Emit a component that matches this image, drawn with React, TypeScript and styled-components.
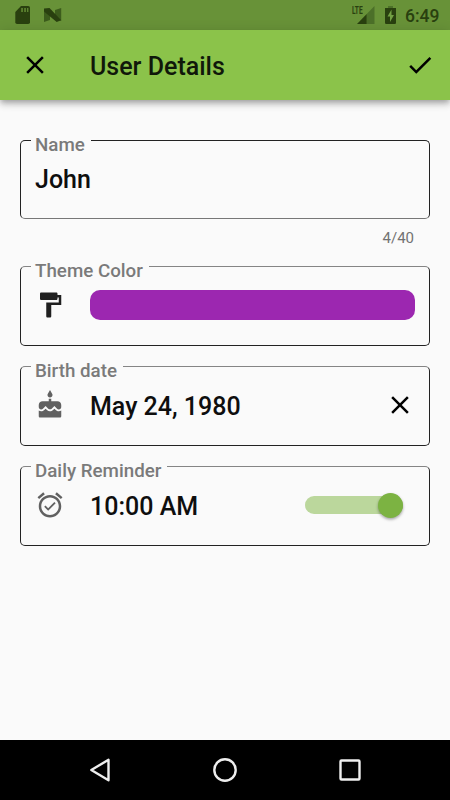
import React from 'react';
import styled, { createGlobalStyle } from 'styled-components';

const GlobalStyle = createGlobalStyle`
  * { box-sizing: border-box; }
  body { margin: 0; background: #fafafa; font-family: Roboto, "Liberation Sans", sans-serif; }
`;

const Screen = styled.div`
  width: 450px;
  height: 800px;
  display: flex;
  flex-direction: column;
  background: #fafafa;
  overflow: hidden;
`;

const StatusBar = styled.div`
  height: 30px;
  flex: none;
  display: flex;
  align-items: center;
  padding: 0 10px 0 12px;
  background: #689238;
  color: #29400f;
`;

const StatusIcons = styled.div`
  display: flex;
  align-items: flex-start;
  height: 30px;
`;

const StatusIcon = styled.svg<{ $w: number; $gap?: number }>`
  display: block;
  width: ${p => p.$w}px;
  height: 30px;
  margin-left: ${p => p.$gap ?? 0}px;
  flex: none;
`;

const Spacer = styled.div`
  flex: 1;
`;

const Network = styled.span`
  width: 11px;
  margin-right: -12px;
  padding-top: 5px;
  font-size: 11px;
  line-height: 11px;
  font-weight: 700;
  white-space: nowrap;
  transform: scaleX(0.6);
  transform-origin: left;
`;

const Clock = styled.span`
  width: 35px;
  margin-left: 9px;
  font-size: 17.5px;
  line-height: 32px;
  font-weight: 500;
`;

const AppBar = styled.header`
  height: 70px;
  flex: none;
  display: flex;
  align-items: center;
  padding: 0 15px 0 20px;
  background: #8bc34a;
  box-shadow: 0 2.5px 5px -1px rgba(0, 0, 0, 0.2), 0 5px 6px rgba(0, 0, 0, 0.14), 0 1px 12px rgba(0, 0, 0, 0.12);
  z-index: 1;
`;

const Title = styled.h1`
  flex: 1;
  margin: 3px 0 0 40px;
  font-size: 25px;
  line-height: 30px;
  font-weight: 500;
  letter-spacing: 0;
  color: #10180a;
`;

const Glyph = styled.svg<{ $color?: string }>`
  display: block;
  width: 30px;
  height: 30px;
  flex: none;
  fill: ${p => p.$color ?? '#000'};
`;

const Form = styled.main`
  flex: 1;
  padding: 30px 20px 0;
`;

const Field = styled.fieldset<{ $height: number; $top: string; $bottom: string }>`
  display: block;
  min-width: 0;
  height: ${p => p.$height}px;
  margin: 0 0 10px;
  padding: 0 14px;
  border: 1px solid #222;
  border-top-color: ${p => p.$top};
  border-bottom-color: ${p => p.$bottom};
  border-radius: 5px;
`;

const Label = styled.legend<{ $width: number }>`
  width: ${p => p.$width}px;
  height: 21px;
  margin-left: -4px;
  padding: 0 0 0 4px;
  font-size: 18.75px;
  line-height: 31px;
  font-weight: 500;
  white-space: nowrap;
  color: #7a7a7a;
`;

const FieldRow = styled.div<{ $top?: number }>`
  display: flex;
  align-items: center;
  height: 30px;
  margin-top: ${p => p.$top ?? 13}px;
`;

const Value = styled.span<{ $inset?: boolean }>`
  flex: 1;
  margin-left: ${p => (p.$inset ? 25 : 0)}px;
  padding-top: 3px;
  font-size: 25px;
  line-height: 30px;
  font-weight: 500;
  letter-spacing: 0;
  color: #0e0e0e;
  white-space: nowrap;
`;

const Counter = styled.div`
  height: 27px;
  padding: 0 16px 0 0;
  text-align: right;
  font-size: 15px;
  line-height: 18px;
  color: #727272;
`;

const Swatch = styled.div`
  flex: 1;
  height: 30px;
  margin-left: 25px;
  border-radius: 10px;
  background: #9c27b0;
`;

const Track = styled.div`
  display: flex;
  align-items: center;
  justify-content: flex-end;
  width: 98px;
  height: 18px;
  margin-right: 12.5px;
  border-radius: 9px;
  background: #bbd79c;
`;

const Thumb = styled.div`
  width: 25px;
  height: 25px;
  flex: none;
  border-radius: 50%;
  background: #7cb342;
  box-shadow: 0 1.5px 3px rgba(0, 0, 0, 0.35);
`;

const NavBar = styled.nav`
  height: 60px;
  flex: none;
  display: flex;
  align-items: center;
  justify-content: center;
  gap: 95px;
  background: #000;
`;

const NavIcon = styled.svg`
  display: block;
  width: 30px;
  height: 30px;
  fill: none;
  stroke: #eee;
  stroke-width: 2.4;
  stroke-linejoin: round;
`;

const CLOSE = 'M19 6.41L17.59 5 12 10.59 6.41 5 5 6.41 10.59 12 5 17.59 6.41 19 12 13.41 17.59 19 19 17.59 13.41 12z';
const CHECK = 'M9 16.17L4.83 12l-1.42 1.41L9 19 21 7l-1.41-1.41z';
const PAINT = 'M18 4V3c0-.55-.45-1-1-1H5c-.55 0-1 .45-1 1v4c0 .55.45 1 1 1h12c.55 0 1-.45 1-1V6h1v4H9v11c0 .55.45 1 1 1h2c.55 0 1-.45 1-1v-9h8V4h-3z';
const CAKE = 'M12 6c1.11 0 2-.9 2-2 0-.38-.1-.73-.29-1.03L12 0l-1.71 2.97c-.19.3-.29.65-.29 1.03 0 1.1.9 2 2 2zm4.6 9.99l-1.07-1.07-1.08 1.07c-1.3 1.3-3.58 1.31-4.89 0l-1.07-1.07-1.09 1.07C6.75 16.64 5.88 17 4.96 17c-.73 0-1.4-.23-1.96-.61V21c0 .55.45 1 1 1h16c.55 0 1-.45 1-1v-4.61c-.56.38-1.23.61-1.96.61-.92 0-1.79-.36-2.44-1.01zM18 9h-5V7h-2v2H6c-1.66 0-3 1.34-3 3v1.54c0 1.08.88 1.96 1.96 1.96.52 0 1.02-.2 1.38-.57l2.14-2.13 2.13 2.13c.74.74 2.03.74 2.77 0l2.14-2.13 2.13 2.13c.37.37.86.57 1.38.57 1.08 0 1.96-.88 1.96-1.96V12C21 10.34 19.66 9 18 9z';
const ALARM = 'M22 5.72l-4.6-3.86-1.29 1.53 4.6 3.86L22 5.72zM7.88 3.39L6.6 1.86 2 5.71l1.29 1.53 4.59-3.85zM12 4c-4.97 0-9 4.03-9 9s4.02 9 9 9c4.97 0 9-4.03 9-9s-4.03-9-9-9zm0 16c-3.87 0-7-3.13-7-7s3.13-7 7-7 7 3.13 7 7-3.13 7-7 7zm-1.46-5.47L8.41 12.4l-1.06 1.06 3.18 3.18 6-6-1.06-1.06-4.93 4.95z';

const Icon = ({ d, color }: { d: string; color?: string }) => (
  <Glyph viewBox="0 0 24 24" $color={color}><path d={d} /></Glyph>
);

export default function App() {
  return (
    <>
      <GlobalStyle />
      <Screen>
        <StatusBar>
          <StatusIcons>
            <StatusIcon $w={20} viewBox="0 0 20 30">
              <path fill="#29400f" d="M9 6h7.2a1.8 1.8 0 0 1 1.8 1.8v14.4a1.8 1.8 0 0 1-1.8 1.8H5.1a1.8 1.8 0 0 1-1.8-1.8V12z" />
              <path fill="#5c8431" d="M9.2 8h1.7v4H9.2zM12.2 8h1.7v4h-1.7zM15 8h1.4v4H15z" />
            </StatusIcon>
            <StatusIcon $w={20} $gap={11} viewBox="0 0 20 30">
              <path fill="#3c5c1c" d="M1 9l6 4v7l-6 2zM18.2 8v13L12 17v-7z" />
              <path fill="#29400f" d="M1 8.5L6.5 8l11.7 12.3-4.5 1.7L1 11.5z" />
            </StatusIcon>
          </StatusIcons>
          <Spacer />
          <StatusIcons>
            <Network>LTE</Network>
            <StatusIcon $w={24} viewBox="0 0 24 30">
              <path fill="#4c7029" d="M15.7 14L23.5 6v18h-7.8z" />
              <path fill="#29400f" d="M6 24l9.7-10v10z" />
            </StatusIcon>
            <StatusIcon $w={12} $gap={9} viewBox="0 0 12 30">
              <path fill="#4c7029" d="M4 6h5v2H4z" />
              <path fill="#29400f" d="M1 8h11v15.2l-.8.8H1.8l-.8-.8z" />
              <path fill="#72a043" d="M7.5 9.5L3.5 16.5H6V22l4-7H7.5z" />
            </StatusIcon>
            <Clock>6:49</Clock>
          </StatusIcons>
        </StatusBar>
        <AppBar>
          <Icon d={CLOSE} />
          <Title>User Details</Title>
          <Icon d={CHECK} />
        </AppBar>
        <Form>
          <Field $height={89} $top="#222" $bottom="#777">
            <Label $width={60}>Name</Label>
            <FieldRow $top={12}><Value>John</Value></FieldRow>
          </Field>
          <Counter>4/40</Counter>
          <Field $height={90} $top="#858585" $bottom="#222">
            <Label $width={118}>Theme Color</Label>
            <FieldRow>
              <Icon d={PAINT} color="#1f1f1f" />
              <Swatch />
            </FieldRow>
          </Field>
          <Field $height={90} $top="#858585" $bottom="#222">
            <Label $width={92}>Birth date</Label>
            <FieldRow>
              <Icon d={CAKE} color="#616161" />
              <Value $inset>May 24, 1980</Value>
              <Icon d={CLOSE} />
            </FieldRow>
          </Field>
          <Field $height={90} $top="#858585" $bottom="#222">
            <Label $width={136}>Daily Reminder</Label>
            <FieldRow>
              <Icon d={ALARM} color="#616161" />
              <Value $inset>10:00 AM</Value>
              <Track><Thumb /></Track>
            </FieldRow>
          </Field>
        </Form>
        <NavBar>
          <NavIcon viewBox="0 0 30 30"><path d="M6.3 15L23.5 4.8v20.4z" /></NavIcon>
          <NavIcon viewBox="0 0 30 30"><circle cx="15" cy="15" r="10.7" /></NavIcon>
          <NavIcon viewBox="0 0 30 30"><rect x="5.5" y="5.5" width="19" height="19" rx="1" /></NavIcon>
        </NavBar>
      </Screen>
    </>
  );
}
